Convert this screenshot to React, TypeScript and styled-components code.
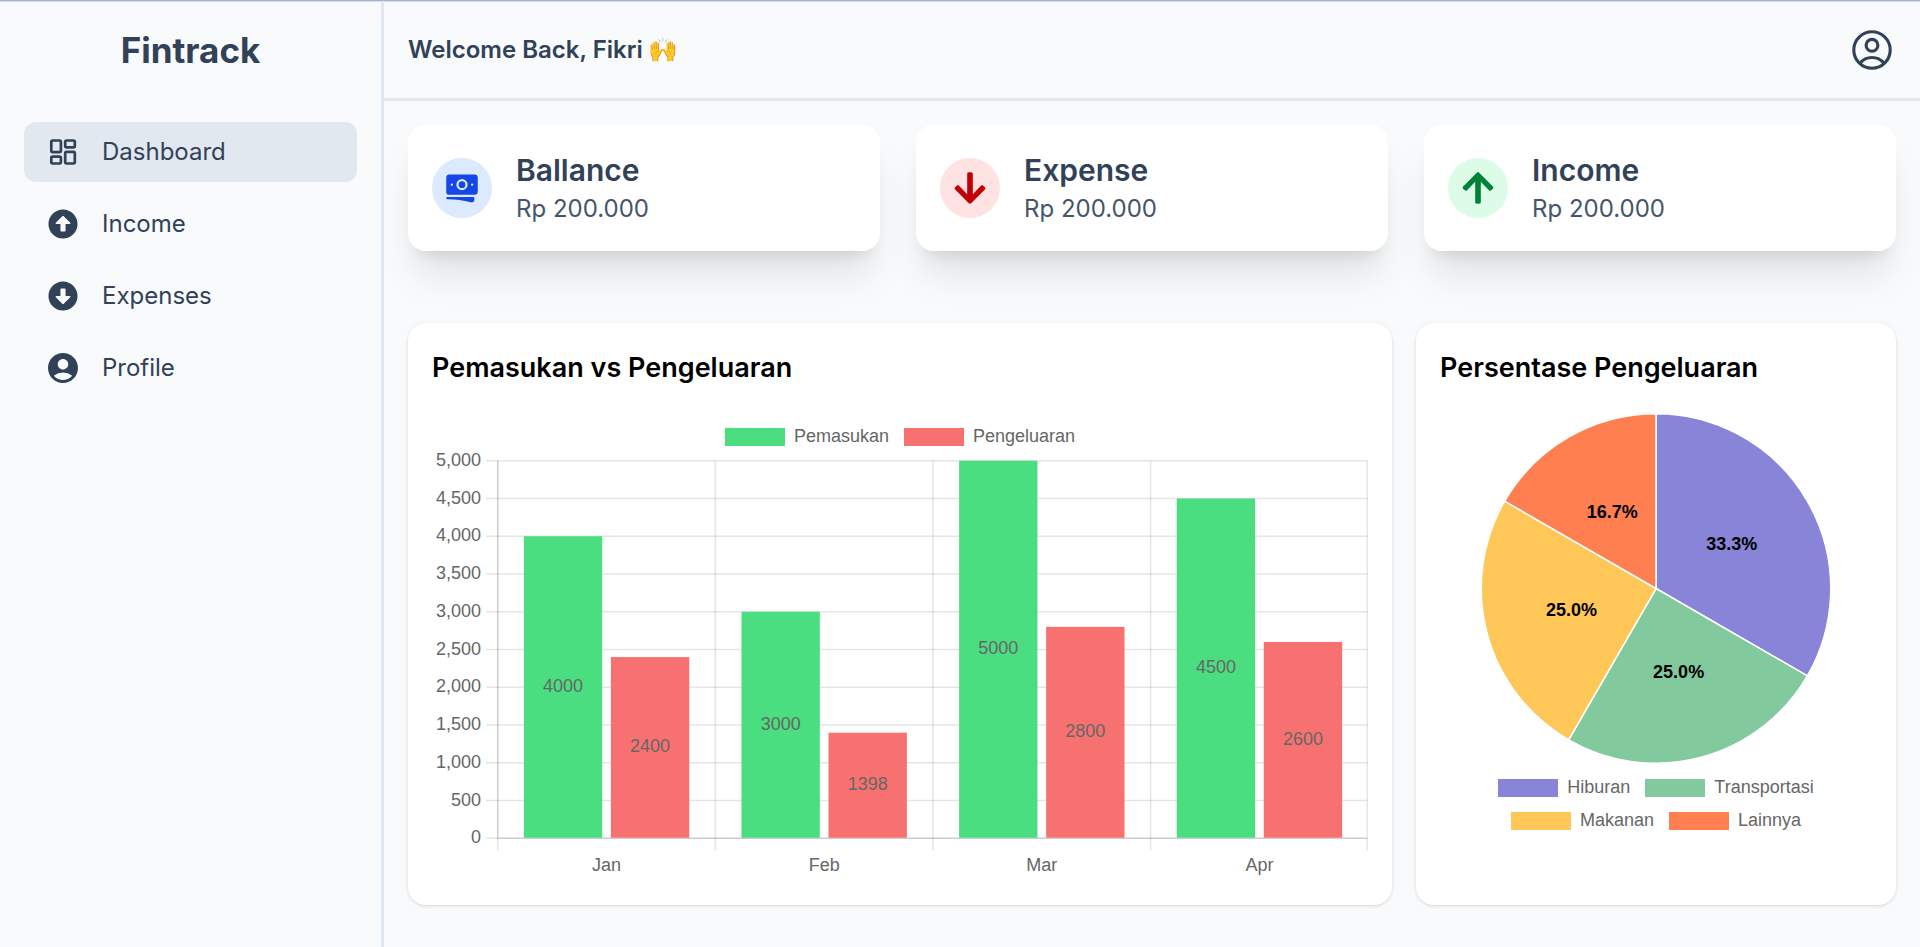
import React from "react";
import styled, { createGlobalStyle } from "styled-components";
import { FaArrowAltCircleDown, FaArrowAltCircleUp, FaArrowDown, FaArrowUp } from "react-icons/fa";
import { HiBanknotes } from "react-icons/hi2";
import { MdAccountCircle } from "react-icons/md";

const GlobalStyle = createGlobalStyle`
  *, *::before, *::after { box-sizing: border-box; }
  body {
    margin: 0;
    background: #f8fafc;
    color: #000;
    font-family: Inter, "Noto Color Emoji", sans-serif;
  }
  h1, h2, h3, p, ul { margin: 0; padding: 0; }
`;

const Page = styled.div`
  display: flex;
  min-height: 100vh;
  border-top: 1px solid #a3b1cd;
  box-shadow: inset 0 1px 0 #d6dce9;
`;

const Sidebar = styled.aside`
  flex: 0 0 384px;
  padding: 1px 24px 24px;
  border-right: 3px solid #e2e8f0;
`;

const Brand = styled.h1`
  display: flex;
  align-items: center;
  justify-content: center;
  height: 96px;
  margin-bottom: 24px;
  color: #314158;
  font-size: 35px;
  font-weight: 700;
  line-height: 48px;
`;

const NavList = styled.ul`
  display: flex;
  flex-direction: column;
  gap: 12px;
  list-style: none;
`;

const NavLink = styled.a<{ $active?: boolean }>`
  display: flex;
  align-items: center;
  gap: 21px;
  height: 60px;
  padding: 0 21px;
  border-radius: 12px;
  background: ${(p) => (p.$active ? "#e2e8f0" : "transparent")};
  color: #314158;
  font-size: 24px;
  line-height: 36px;
  text-decoration: none;
`;

const NavIcon = styled.span`
  display: flex;
  align-items: center;
  justify-content: center;
  width: 36px;
  height: 36px;
`;

const Main = styled.main`
  flex: 1;
  min-width: 0;
`;

const Header = styled.header`
  display: flex;
  align-items: center;
  justify-content: space-between;
  height: 100px;
  padding: 1px 24px 0;
  border-bottom: 3px solid #e2e8f0;
  color: #314158;
`;

const Greeting = styled.h2`
  font-size: 24px;
  font-weight: 600;
  line-height: 36px;
`;

const AccountButton = styled.button`
  display: flex;
  padding: 0;
  border: 0;
  background: none;
  color: inherit;
  cursor: pointer;
`;

const Content = styled.div`
  display: flex;
  flex-direction: column;
  gap: 72px;
  padding: 24px;
`;

const StatGrid = styled.section`
  display: grid;
  grid-template-columns: repeat(3, minmax(0, 1fr));
  gap: 36px;
`;

const StatCard = styled.article`
  display: flex;
  align-items: center;
  gap: 24px;
  padding: 24px;
  border-radius: 18px;
  background: #fff;
  box-shadow: 0 30px 38px -8px rgba(0, 0, 0, 0.1), 0 12px 15px -9px rgba(0, 0, 0, 0.1);
`;

const StatIcon = styled.span<{ $bg: string; $fg: string }>`
  display: flex;
  align-items: center;
  justify-content: center;
  width: 60px;
  height: 60px;
  border-radius: 50%;
  background: ${(p) => p.$bg};
  color: ${(p) => p.$fg};
`;

const StatTitle = styled.h3`
  color: #314158;
  font-size: 30px;
  font-weight: 600;
  line-height: 42px;
`;

const StatValue = styled.p`
  color: #45556c;
  font-size: 24px;
  line-height: 36px;
`;

const ChartGrid = styled.section`
  display: grid;
  grid-template-columns: repeat(3, minmax(0, 1fr));
  gap: 24px;
`;

const ChartCard = styled.article<{ $span?: number }>`
  grid-column: span ${(p) => p.$span ?? 1};
  padding: 24px;
  border-radius: 18px;
  background: #fff;
  box-shadow: 0 1px 4px rgba(0, 0, 0, 0.1), 0 1px 3px -1px rgba(0, 0, 0, 0.1);
`;

const ChartTitle = styled.h3`
  margin-bottom: 24px;
  font-size: 27px;
  font-weight: 600;
  line-height: 42px;
`;

const Legend = styled.ul`
  display: flex;
  flex-wrap: wrap;
  justify-content: center;
  gap: 15px;
  padding-top: 15px;
  list-style: none;
`;

const LegendItem = styled.li`
  display: flex;
  align-items: flex-start;
  gap: 9px;
  color: #666;
  font: 18px/16px "Liberation Sans", Arial, sans-serif;
`;

const Swatch = styled.span<{ $color: string }>`
  width: 60px;
  height: 18px;
  background: ${(p) => p.$color};
`;

const Chart = styled.svg`
  display: block;
  width: 100%;
  height: auto;
  font: 18px "Liberation Sans", Arial, sans-serif;
  fill: #666;
`;

const DashboardIcon = () => (
  <svg width="36" height="36" viewBox="0 0 36 36" fill="none" stroke="currentColor" strokeWidth="2.7" aria-hidden="true">
    <rect x="6.3" y="6.5" width="9.6" height="11.6" rx="1.4" />
    <rect x="6.3" y="22.7" width="9.6" height="6.8" rx="1.4" />
    <rect x="20.2" y="6.5" width="9.6" height="6.8" rx="1.4" />
    <rect x="20.2" y="17.9" width="9.6" height="11.6" rx="1.4" />
  </svg>
);

const AccountIcon = () => (
  <svg width="48" height="48" viewBox="0 0 48 48" fill="none" stroke="currentColor" strokeWidth="3.1" aria-hidden="true">
    <circle cx="24" cy="24" r="18.2" />
    <circle cx="24" cy="19.3" r="5.9" />
    <path d="M12 37.3A15.2 15.2 0 0 1 36 37.3" />
  </svg>
);

const navItems = [
  { label: "Dashboard", icon: <DashboardIcon />, active: true },
  { label: "Income", icon: <FaArrowAltCircleUp size={30} /> },
  { label: "Expenses", icon: <FaArrowAltCircleDown size={30} /> },
  { label: "Profile", icon: <MdAccountCircle size={36} /> },
];

const stats = [
  { title: "Ballance", value: "Rp 200.000", bg: "#dbeafe", fg: "#1447e6", icon: <HiBanknotes size={36} /> },
  { title: "Expense", value: "Rp 200.000", bg: "#ffe2e2", fg: "#c10007", icon: <FaArrowDown size={36} /> },
  { title: "Income", value: "Rp 200.000", bg: "#dcfce7", fg: "#008236", icon: <FaArrowUp size={36} /> },
];

const series = [
  { label: "Pemasukan", color: "#4ade80", values: [4000, 3000, 5000, 4500] },
  { label: "Pengeluaran", color: "#f87171", values: [2400, 1398, 2800, 2600] },
];
const months = ["Jan", "Feb", "Mar", "Apr"];

const slices = [
  { label: "Hiburan", color: "#8884d8", amount: 400 },
  { label: "Transportasi", color: "#82ca9d", amount: 300 },
  { label: "Makanan", color: "#ffc658", amount: 300 },
  { label: "Lainnya", color: "#ff7f50", amount: 200 },
];

const LegendList = ({ items }: { items: { label: string; color: string }[] }) => (
  <Legend>
    {items.map((item) => (
      <LegendItem key={item.label}>
        <Swatch $color={item.color} />
        {item.label}
      </LegendItem>
    ))}
  </Legend>
);

const plot = { left: 65.75, right: 936.25, top: 14.75, bottom: 392.25 };
const gridRight = 935.25;
const yMax = 5000;
const yOf = (value: number) => plot.bottom - (value / yMax) * (plot.bottom - plot.top);

const BarChart = () => {
  const category = (plot.right - plot.left) / months.length;
  const slot = category * 0.4;
  const barWidth = slot * 0.9;
  const ticks = Array.from({ length: 11 }, (_, i) => i * 500);
  return (
    <Chart viewBox="0 0 936 435" role="img" aria-label="Pemasukan vs Pengeluaran">
      <g stroke="#000" strokeOpacity={0.1} strokeWidth={1.5}>
        {ticks.map((t) => (
          <line key={t} x1={54} x2={gridRight} y1={yOf(t)} y2={yOf(t)} />
        ))}
        {[0, 1, 2, 3, 4].map((i) => {
          const x = Math.min(plot.left + i * category, gridRight);
          return <line key={i} x1={x} x2={x} y1={plot.top} y2={404} />;
        })}
        <line x1={plot.left} x2={plot.left} y1={plot.top} y2={plot.bottom} />
        <line x1={plot.left} x2={gridRight} y1={plot.bottom} y2={plot.bottom} />
      </g>
      {series.map((s, si) =>
        s.values.map((v, i) => {
          const x = plot.left + i * category + category * 0.1 + si * slot + slot * 0.05;
          return (
            <g key={`${s.label}-${i}`}>
              <rect x={x} y={yOf(v)} width={barWidth} height={plot.bottom - yOf(v) - 0.5} fill={s.color} />
              <text x={x + barWidth / 2} y={yOf(v / 2) + 4.5} textAnchor="middle">{v}</text>
            </g>
          );
        })
      )}
      {ticks.map((t) => (
        <text key={t} x={49} y={yOf(t) + 5} textAnchor="end">{t.toLocaleString("en-US")}</text>
      ))}
      {months.map((m, i) => (
        <text key={m} x={plot.left + (i + 0.5) * category} y={425} textAnchor="middle">{m}</text>
      ))}
    </Chart>
  );
};

const PieChart = () => {
  const total = slices.reduce((sum, s) => sum + s.amount, 0);
  const cx = 216;
  const cy = 175.5;
  const r = 174.75;
  const at = (turn: number, radius: number): [number, number] => [
    cx + radius * Math.sin(turn * 2 * Math.PI),
    cy - radius * Math.cos(turn * 2 * Math.PI),
  ];
  let start = 0;
  const parts = slices.map((s) => {
    const share = s.amount / total;
    const [x1, y1] = at(start, r);
    const [x2, y2] = at(start + share, r);
    const [lx, ly] = at(start + share / 2, r / 2);
    start += share;
    return { ...s, share, lx, ly, d: `M${cx} ${cy}L${x1} ${y1}A${r} ${r} 0 0 1 ${x2} ${y2}Z` };
  });
  return (
    <Chart viewBox="0 0 432 351" role="img" aria-label="Persentase Pengeluaran">
      {parts.map((p) => (
        <path key={p.label} d={p.d} fill={p.color} stroke="#fff" strokeWidth={1.5} strokeLinejoin="round" />
      ))}
      {parts.map((p) => (
        <text key={p.label} x={p.lx} y={p.ly + 5} textAnchor="middle" fontWeight={700} fill="#000">
          {(p.share * 100).toFixed(1)}%
        </text>
      ))}
    </Chart>
  );
};

export default function App() {
  return (
    <>
      <GlobalStyle />
      <Page>
        <Sidebar>
          <Brand>Fintrack</Brand>
          <nav>
            <NavList>
              {navItems.map((item) => (
                <li key={item.label}>
                  <NavLink href="#" $active={item.active} aria-current={item.active ? "page" : undefined}>
                    <NavIcon>{item.icon}</NavIcon>
                    {item.label}
                  </NavLink>
                </li>
              ))}
            </NavList>
          </nav>
        </Sidebar>
        <Main>
          <Header>
            <Greeting>Welcome Back, Fikri 🙌</Greeting>
            <AccountButton type="button" aria-label="Account">
              <AccountIcon />
            </AccountButton>
          </Header>
          <Content>
            <StatGrid>
              {stats.map((s) => (
                <StatCard key={s.title}>
                  <StatIcon $bg={s.bg} $fg={s.fg}>{s.icon}</StatIcon>
                  <div>
                    <StatTitle>{s.title}</StatTitle>
                    <StatValue>{s.value}</StatValue>
                  </div>
                </StatCard>
              ))}
            </StatGrid>
            <ChartGrid>
              <ChartCard $span={2}>
                <ChartTitle>Pemasukan vs Pengeluaran</ChartTitle>
                <LegendList items={series} />
                <BarChart />
              </ChartCard>
              <ChartCard>
                <ChartTitle>Persentase Pengeluaran</ChartTitle>
                <PieChart />
                <LegendList items={slices} />
              </ChartCard>
            </ChartGrid>
          </Content>
        </Main>
      </Page>
    </>
  );
}
